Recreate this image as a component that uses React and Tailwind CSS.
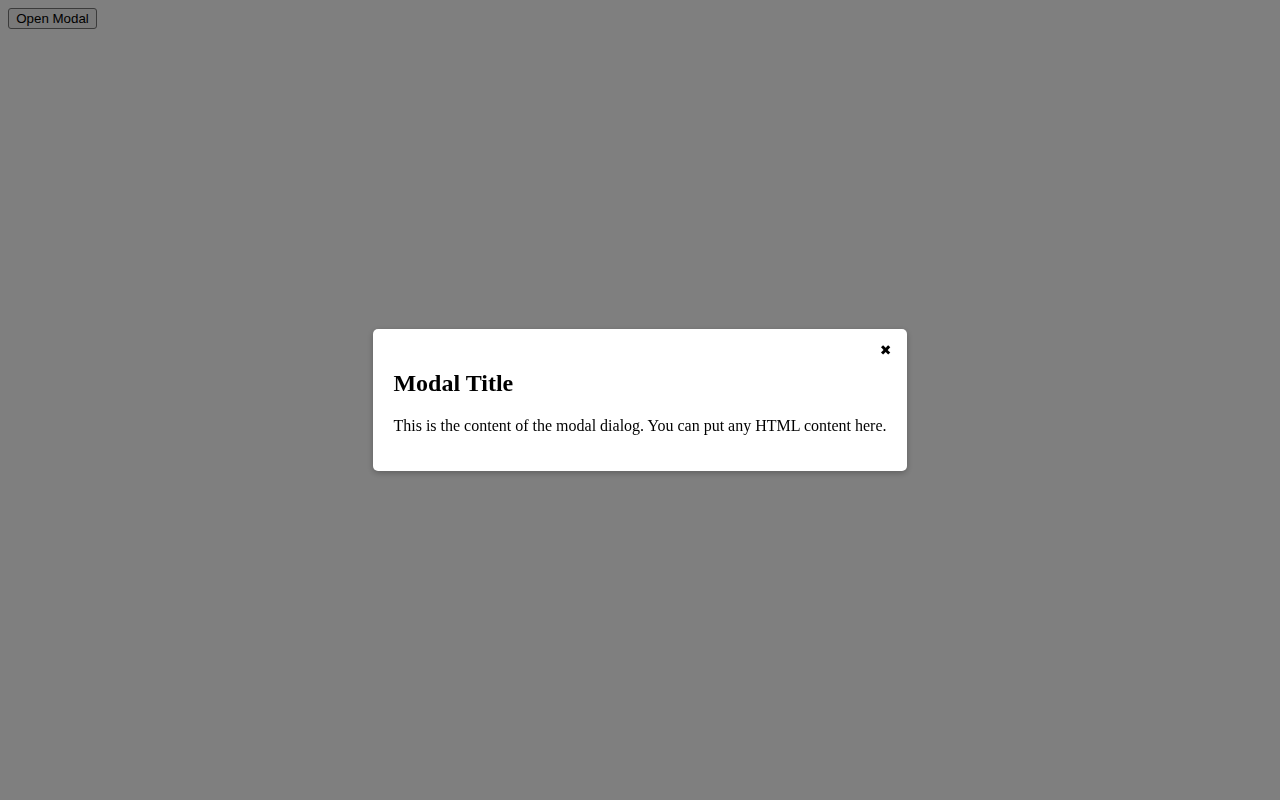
export default function App() {
  return (
    <div className="relative w-[1280px] h-[800px] bg-white" style={{ fontFamily: '"Liberation Serif", serif' }}>
      <button
        className="absolute left-2 top-2 w-[89px] h-[21px] border border-[#767676] rounded-[3px] bg-[#f2f2f2] text-[13.33px] leading-none text-black"
        style={{ fontFamily: '"Liberation Sans", Arial, sans-serif' }}
      >
        Open Modal
      </button>

      {/* Overlay */}
      <div className="fixed inset-0 bg-black/50 flex items-center justify-center">
        <div className="relative bg-white rounded-[5px] shadow-[0_2px_6px_rgba(0,0,0,0.25)] p-5">
          <span
            className="absolute top-[14px] right-[15px] text-[14px] leading-none text-black cursor-pointer"
            style={{ fontFamily: '"DejaVu Sans", sans-serif' }}
          >
            ✖
          </span>
          <h2 className="text-[24px] font-bold leading-[27.6px] mt-[21px] mb-[19px] text-black">Modal Title</h2>
          <p className="text-[16px] leading-[18.4px] mb-4 text-black">
            This is the content of the modal dialog. You can put any HTML content here.
          </p>
        </div>
      </div>
    </div>
  );
}
